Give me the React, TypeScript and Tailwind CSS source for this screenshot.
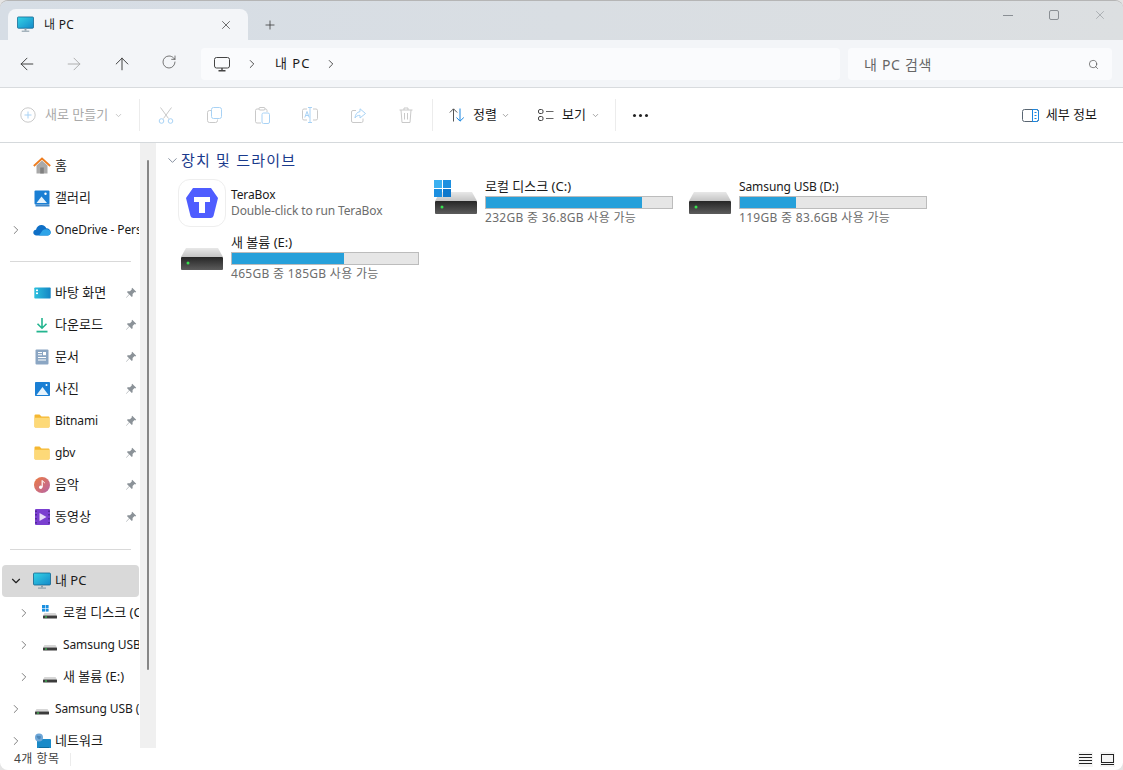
import { ArrowLeft, ArrowRight, ArrowUp, ChevronDown, ChevronRight, Plus, RotateCw, Search, X } from "lucide-react";
import type { ReactNode } from "react";

const fontClass = "font-['Noto_Sans','Noto_Sans_CJK_KR',sans-serif]";

function MonitorColor({ size = 18 }: { size?: number }) {
  return (
    <svg width={size} height={size} viewBox="0 0 18 18">
      <defs>
        <linearGradient id="screenFill" x1="0" y1="0" x2="1" y2="1">
          <stop offset="0" stopColor="#35d3e6" />
          <stop offset="1" stopColor="#1489c9" />
        </linearGradient>
      </defs>
      <rect x="0.5" y="1" width="17" height="12" rx="1" fill="url(#screenFill)" stroke="#11658f" strokeWidth="0.8" />
      <rect x="8" y="13" width="2" height="2.5" fill="#8ea0ac" />
      <rect x="5" y="15.5" width="8" height="1.2" fill="#8ea0ac" />
    </svg>
  );
}

function PinIcon() {
  return (
    <svg width="12" height="12" viewBox="0 0 12 12" fill="#8b9298">
      <path d="M7.2 0.8 11.2 4.8 10.2 5.4 9.5 5.1 7.6 7 7.6 9.2 6.8 10 4.4 7.6 1.4 10.8 1.1 10.5 4.1 7.3 1.9 5 2.8 4.2 5 4.2 6.9 2.3 6.6 1.7Z" />
    </svg>
  );
}

function HomeIcon() {
  return (
    <svg width="18" height="18" viewBox="0 0 18 18">
      <path d="M3.5 8.5V16.5H14.5V8.5L9 3.5Z" fill="#a9a9a9" />
      <rect x="7.2" y="10.5" width="3.6" height="6" fill="#808080" />
      <path d="M0.8 9 9 1.5 17.2 9" fill="none" stroke="#ee7d1f" strokeWidth="1.8" />
    </svg>
  );
}

function GalleryIcon() {
  return (
    <svg width="16" height="17" viewBox="0 0 16 17">
      <rect x="0.5" y="0.5" width="15" height="14" rx="1" fill="#1a7fd4" />
      <rect x="1.5" y="14.5" width="14" height="2" fill="#3f87c9" />
      <path d="M2.5 13 7.5 6.5 13 13Z" fill="#e6f3fc" />
      <circle cx="11.5" cy="3.8" r="1.2" fill="#fff" />
    </svg>
  );
}

function CloudIcon() {
  return (
    <svg width="18" height="12" viewBox="0 0 18 12">
      <path d="M3.5 11.5C1.5 11.5 0.3 10.2 0.3 8.6 0.3 7 1.5 5.9 3 5.8 3.6 2.8 6 1 8.5 1 10.8 1 12.6 2.3 13.3 4.3 15.8 4.4 17.7 6.2 17.7 8.3 17.7 10.2 16.3 11.5 14.5 11.5Z" fill="#0f6fc6" />
      <path d="M6 11.5 9.5 6.5C11 5 14.5 4.5 16.5 6.3 17.5 7.3 17.7 8.3 17.7 8.6 17.7 10.4 16.3 11.5 14.5 11.5Z" fill="#2ea4e8" />
    </svg>
  );
}

function DesktopIcon() {
  return (
    <svg width="17" height="12" viewBox="0 0 17 12">
      <defs>
        <linearGradient id="deskFill" x1="0" y1="0" x2="1" y2="0">
          <stop offset="0" stopColor="#2cc0de" />
          <stop offset="1" stopColor="#1485c4" />
        </linearGradient>
      </defs>
      <rect x="0.3" y="0.5" width="16.4" height="11" rx="0.8" fill="url(#deskFill)" />
      <rect x="2" y="2.5" width="2" height="1.6" fill="#fff" />
      <rect x="2" y="5.5" width="2" height="1.6" fill="#fff" />
    </svg>
  );
}

function DownloadIcon() {
  return (
    <svg width="16" height="16" viewBox="0 0 16 16" fill="none" stroke="#23b58f" strokeWidth="1.6">
      <path d="M8 1V11M3.5 6.8 8 11.2 12.5 6.8" />
      <path d="M2.5 14.6H13.5" strokeWidth="1.8" />
    </svg>
  );
}

function DocIcon() {
  return (
    <svg width="14" height="16" viewBox="0 0 14 16">
      <rect x="0.5" y="0.5" width="13" height="15" rx="1" fill="#8ba6c3" />
      <path d="M3 3.5H7M3 5.8H7M3 8.5H11M3 11H11" stroke="#fff" strokeWidth="1.1" />
      <rect x="8" y="3" width="3" height="3.2" fill="#fff" />
    </svg>
  );
}

function PhotoIcon() {
  return (
    <svg width="15" height="14" viewBox="0 0 15 14">
      <rect width="15" height="14" rx="0.8" fill="#1a7fd4" />
      <path d="M1.5 13 7.5 5 13.5 13Z" fill="#e6f3fc" />
      <circle cx="11.5" cy="3" r="1" fill="#fff" />
    </svg>
  );
}

function FolderIcon() {
  return (
    <svg width="16" height="14" viewBox="0 0 16 14">
      <path d="M0.5 1.5A1 1 0 0 1 1.5 0.5H5.5L7.5 2.5H14.5A1 1 0 0 1 15.5 3.5V12.5A1 1 0 0 1 14.5 13.5H1.5A1 1 0 0 1 0.5 12.5Z" fill="#f5b731" />
      <path d="M0.5 3.8H15.5V12.5A1 1 0 0 1 14.5 13.5H1.5A1 1 0 0 1 0.5 12.5Z" fill="#fdd978" />
    </svg>
  );
}

function MusicIcon() {
  return (
    <svg width="16" height="16" viewBox="0 0 16 16">
      <defs>
        <linearGradient id="musicFill" x1="0" y1="0" x2="1" y2="1">
          <stop offset="0" stopColor="#ee7b3e" />
          <stop offset="1" stopColor="#b665a8" />
        </linearGradient>
      </defs>
      <circle cx="8" cy="8" r="8" fill="url(#musicFill)" />
      <path d="M8.2 3.5V10" stroke="#fff" strokeWidth="1.2" />
      <path d="M8.2 3.5C9 4.8 10.5 4.8 10.5 6.2" stroke="#fff" strokeWidth="1" fill="none" />
      <circle cx="6.7" cy="10.2" r="1.7" fill="#fff" />
    </svg>
  );
}

function VideoIcon() {
  return (
    <svg width="15" height="16" viewBox="0 0 15 16">
      <rect width="15" height="16" rx="1" fill="#7a3fd0" />
      <path d="M4.5 4 11.5 8 4.5 12Z" fill="#e7dcf8" />
      <path d="M1 1.5V3M1 5V6.5M1 9V10.5M1 13V14.5M14 1.5V3M14 5V6.5M14 9V10.5M14 13V14.5" stroke="#3a1c77" strokeWidth="1.2" />
    </svg>
  );
}

function MiniDrive({ windows = false }: { windows?: boolean }) {
  return (
    <svg width="16" height="16" viewBox="0 0 16 16">
      <path d="M2.5 8H13.5L15 10.5H1Z" fill="#d6d6d6" />
      <rect x="1" y="10.5" width="14" height="3" rx="0.5" fill="#3c3c3c" />
      <rect x="3" y="11.5" width="2" height="1" fill="#3ee05a" />
      {windows && (
        <g fill="#1a8fe0">
          <rect x="0" y="0" width="3" height="3" />
          <rect x="3.6" y="0" width="3" height="3" />
          <rect x="0" y="3.6" width="3" height="3" />
          <rect x="3.6" y="3.6" width="3" height="3" />
        </g>
      )}
    </svg>
  );
}

function NetworkIcon() {
  return (
    <svg width="17" height="17" viewBox="0 0 17 17">
      <rect x="3" y="6" width="14" height="10" rx="0.8" fill="#1a8ac8" />
      <rect x="5" y="14" width="10" height="2" fill="#0f6b9d" />
      <circle cx="5" cy="4.5" r="4" fill="#6ea7d8" />
      <path d="M2.5 3C4 2 5 3.5 6.5 3 7.5 4 6.5 6 5 6.5 4 5.5 3 5 2.5 3Z" fill="#4d87b8" />
    </svg>
  );
}

type NavRow = {
  label: string;
  icon: ReactNode;
  pin?: boolean;
  chevron?: "right" | "down";
  level?: number;
  selected?: boolean;
};

const quickRows: NavRow[] = [
  { label: "바탕 화면", icon: <DesktopIcon />, pin: true },
  { label: "다운로드", icon: <DownloadIcon />, pin: true },
  { label: "문서", icon: <DocIcon />, pin: true },
  { label: "사진", icon: <PhotoIcon />, pin: true },
  { label: "Bitnami", icon: <FolderIcon />, pin: true },
  { label: "gbv", icon: <FolderIcon />, pin: true },
  { label: "음악", icon: <MusicIcon />, pin: true },
  { label: "동영상", icon: <VideoIcon />, pin: true },
];

const pcRows: NavRow[] = [
  { label: "내 PC", icon: <MonitorColor />, chevron: "down", selected: true },
  { label: "로컬 디스크 (C:)", icon: <MiniDrive windows />, chevron: "right", level: 1 },
  { label: "Samsung USB (D:)", icon: <MiniDrive />, chevron: "right", level: 1 },
  { label: "새 볼륨 (E:)", icon: <MiniDrive />, chevron: "right", level: 1 },
  { label: "Samsung USB (D:)", icon: <MiniDrive />, chevron: "right" },
  { label: "네트워크", icon: <NetworkIcon />, chevron: "right" },
];

// hangul reads wider in the original, latin labels stay at 12px
const hasHangul = (s: string) => /[가-힣]/.test(s);

function SidebarRow({ row }: { row: NavRow }) {
  return (
    <div
      className={
        "flex h-8 items-center text-[#1a1a1a] " +
        (row.selected ? "ml-[2px] w-[137px] rounded bg-[#d9d9d9] pl-[7px]" : row.level ? "w-[139px] pl-[17px]" : "w-[139px] pl-[9px]")
      }
    >
      <span className="flex w-[14px] shrink-0 items-center justify-center text-[#7d7d7d]">
        {row.chevron === "right" && <ChevronRight size={14} strokeWidth={1.7} />}
        {row.chevron === "down" && <ChevronDown size={14} strokeWidth={2} className="text-[#222]" />}
      </span>
      <span className="ml-[10px] flex w-[18px] shrink-0 items-center justify-center">{row.icon}</span>
      <span
        className={
          "ml-[4px] min-w-0 flex-1 overflow-hidden whitespace-nowrap " +
          (hasHangul(row.label) ? "text-[13px]" : "text-[12px] tracking-[-0.1px]")
        }
      >
        {row.label}
      </span>
      {row.pin && (
        <span className="mr-[1px] flex w-[14px] shrink-0 justify-center">
          <PinIcon />
        </span>
      )}
    </div>
  );
}

function Sidebar() {
  return (
    <div className="relative flex w-[156px] shrink-0">
      <div className="w-[140px] shrink-0 overflow-hidden bg-white pt-[7px]">
        <SidebarRow row={{ label: "홈", icon: <HomeIcon /> }} />
        <SidebarRow row={{ label: "갤러리", icon: <GalleryIcon /> }} />
        <SidebarRow row={{ label: "OneDrive - Personal", icon: <CloudIcon />, chevron: "right" }} />
        <div className="mt-[15px] mb-[15px] ml-[10px] h-px w-[121px] bg-[#d9d9d9]" />
        {quickRows.map((row) => (
          <SidebarRow key={row.label} row={row} />
        ))}
        <div className="mt-4 mb-[15px] ml-[10px] h-px w-[121px] bg-[#d9d9d9]" />
        {pcRows.map((row, i) => (
          <SidebarRow key={i} row={row} />
        ))}
      </div>
      <div className="w-4 shrink-0 bg-[#f0f0f0] pt-[17px] pl-[7px]">
        <div className="h-[510px] w-[2px] rounded-sm bg-[#868686]" />
      </div>
    </div>
  );
}

function DriveIcon({ windows = false }: { windows?: boolean }) {
  return (
    <svg width="48" height="48" viewBox="0 0 48 48">
      <defs>
        <linearGradient id="driveBody" x1="0" y1="0" x2="0" y2="1">
          <stop offset="0" stopColor="#262626" />
          <stop offset="1" stopColor="#5c5c5c" />
        </linearGradient>
        <linearGradient id="driveTop" x1="0" y1="0" x2="0" y2="1">
          <stop offset="0" stopColor="#e8e8e8" />
          <stop offset="1" stopColor="#c4c4c4" />
        </linearGradient>
      </defs>
      <path d="M7 13H39L44 22H2Z" fill="url(#driveTop)" />
      <rect x="2" y="22" width="42" height="13" rx="1" fill="url(#driveBody)" />
      <circle cx="9" cy="28" r="1.5" fill="#37e04e" />
      {windows && (
        <g>
          <rect x="1" y="1" width="8" height="8" fill="#3bb0f0" />
          <rect x="10" y="1" width="8" height="8" fill="#1c8fe0" />
          <rect x="1" y="10" width="8" height="8" fill="#1c8fe0" />
          <rect x="10" y="10" width="8" height="8" fill="#0f78cc" />
        </g>
      )}
    </svg>
  );
}

function TeraBoxIcon() {
  return (
    <div className="flex h-12 w-12 items-center justify-center rounded-xl border border-[#eeeeee] bg-white">
      <svg width="34" height="32" viewBox="0 0 34 32">
        <path d="M8 1H26L33 11 28.5 29A3 3 0 0 1 25.5 31H8.5A3 3 0 0 1 5.5 29L1 11Z" fill="#4f5dff" />
        <path d="M9 10H25V15H20V26H14V15H9Z" fill="#fff" />
      </svg>
    </div>
  );
}

function DriveTile({ name, used, sub, windows }: { name: string; used: number; sub: string; windows?: boolean }) {
  return (
    <div className="flex h-14 w-[254px] items-center">
      <div className="w-[53px] shrink-0 pl-px">
        <DriveIcon windows={windows} />
      </div>
      <div className="flex w-[188px] flex-col text-[12px]">
        <span
          className={
            "h-[15px] leading-[13px] whitespace-nowrap text-[#1a1a1a] " +
            (hasHangul(name) ? "text-[13px]" : "text-[12px] tracking-[-0.1px]")
          }
        >
          {name}
        </span>
        <div className="mt-px h-[13px] w-[188px] border border-[#bcbcbc] bg-[#e6e6e6]">
          <div className="h-full bg-[#26a0da]" style={{ width: `${used}%` }} />
        </div>
        <span className="mt-px h-4 leading-4 tracking-[0.3px] whitespace-nowrap text-[#6d6d6d]">{sub}</span>
      </div>
    </div>
  );
}

function Content() {
  return (
    <div className="min-w-0 flex-1 bg-white pt-[7px] pl-[9px]">
      <div className="flex h-5 items-center">
        <ChevronDown size={15} strokeWidth={1.2} className="text-[#5d6b80]" />
        <span className="ml-px text-[15px] tracking-[1.2px] whitespace-nowrap text-[#1a3a8c]">장치 및 드라이브</span>
      </div>
      <div className="mt-[5px] ml-[13px] flex w-[770px] flex-wrap">
        <div className="flex h-14 w-[254px] items-center">
          <div className="w-[53px] shrink-0">
            <TeraBoxIcon />
          </div>
          <div className="flex flex-col text-[12px] leading-4 tracking-[-0.12px]">
            <span className="text-[#1a1a1a]">TeraBox</span>
            <span className="text-[#6d6d6d]">Double-click to run TeraBox</span>
          </div>
        </div>
        <DriveTile name="로컬 디스크 (C:)" used={84} sub="232GB 중 36.8GB 사용 가능" windows />
        <DriveTile name="Samsung USB (D:)" used={30} sub="119GB 중 83.6GB 사용 가능" />
        <DriveTile name="새 볼륨 (E:)" used={60} sub="465GB 중 185GB 사용 가능" />
      </div>
    </div>
  );
}

function ToolIcon({ children }: { children: ReactNode }) {
  return <div className="flex h-5 w-12 items-center justify-center">{children}</div>;
}

function Toolbar() {
  const blue = "#a8d2f5";
  const grey = "#c9c9c9";
  return (
    <div className="flex h-[55px] items-center border-b border-[#d5d9dc] bg-white pl-5 text-[13px]">
      <svg width="16" height="16" viewBox="0 0 16 16" fill="none">
        <circle cx="8" cy="8" r="7.2" stroke={grey} />
        <path d="M8 4.5V11.5M4.5 8H11.5" stroke={blue} />
      </svg>
      <span className="ml-[9px] w-[65px] whitespace-nowrap text-[#a9a9a9]">새로 만들기</span>
      <ChevronDown size={9} className="ml-[4px] text-[#b5b5b5]" />
      <div className="ml-[16px] h-8 w-px bg-[#ececec]" />
      <div className="ml-[2px] flex">
        <ToolIcon>
          <svg width="16" height="17" viewBox="0 0 16 17" fill="none" stroke={grey}>
            <path d="M2.5 0.5 10.5 11.5M13.5 0.5 5.5 11.5" />
            <circle cx="3.5" cy="14" r="2.3" stroke={blue} />
            <circle cx="12.5" cy="14" r="2.3" stroke={blue} />
          </svg>
        </ToolIcon>
        <ToolIcon>
          <svg width="15" height="16" viewBox="0 0 15 16" fill="none">
            <rect x="4.5" y="0.5" width="10" height="11" rx="2" stroke={blue} />
            <path d="M4 3.5H2.5A2 2 0 0 0 0.5 5.5V13.5A2 2 0 0 0 2.5 15.5H8.5A2 2 0 0 0 10.5 13.5V12.5" stroke={grey} />
          </svg>
        </ToolIcon>
        <ToolIcon>
          <svg width="15" height="17" viewBox="0 0 15 17" fill="none">
            <path d="M4.5 2H2A1.5 1.5 0 0 0 0.5 3.5V14.5A1.5 1.5 0 0 0 2 16H6M9.5 2H10.5A1.5 1.5 0 0 1 12 3.5V5" stroke={grey} />
            <rect x="4" y="0.5" width="6" height="2.5" rx="1" stroke={grey} />
            <rect x="7" y="6" width="7.5" height="10.5" rx="1.5" stroke={blue} />
          </svg>
        </ToolIcon>
        <ToolIcon>
          <svg width="16" height="16" viewBox="0 0 16 16" fill="none">
            <path d="M5 2H2A1.5 1.5 0 0 0 0.5 3.5V11.5A1.5 1.5 0 0 0 2 13H5M11 2H14A1.5 1.5 0 0 1 15.5 3.5V11.5A1.5 1.5 0 0 1 14 13H11" stroke={grey} />
            <path d="M8 0.5V15.5M6 0.5H10M6 15.5H10" stroke={blue} />
            <path d="M2.8 10.5 5 4.5 7.2 10.5M3.6 8.5H6.4" stroke={blue} />
          </svg>
        </ToolIcon>
        <ToolIcon>
          <svg width="15" height="15" viewBox="0 0 15 15" fill="none">
            <path d="M5 2.5H2A1.5 1.5 0 0 0 0.5 4V13A1.5 1.5 0 0 0 2 14.5H10.5A1.5 1.5 0 0 0 12 13V10.5" stroke={grey} />
            <path d="M9 0.8 14.5 5.5 9 10V7.3C6.5 7.3 5 8.3 4 10 4.2 6.5 6 4 9 3.6Z" stroke={blue} />
          </svg>
        </ToolIcon>
        <ToolIcon>
          <svg width="14" height="16" viewBox="0 0 14 16" fill="none" stroke={grey}>
            <path d="M0.5 3H13.5M5 3V1H9V3M2 3 3 15.5H11L12 3M5.5 6V12.5M8.5 6V12.5" />
          </svg>
        </ToolIcon>
      </div>
      <div className="ml-[2px] h-8 w-px bg-[#ececec]" />
      <svg className="ml-[16px]" width="16" height="14" viewBox="0 0 16 14" fill="none">
        <path d="M4.5 13.5V1M0.8 4.5 4.5 0.8 8.2 4.5" stroke="#555" />
        <path d="M11 0.5V13M7.5 9.5 11 13.2 14.8 9.5" stroke="#1a86e0" />
      </svg>
      <span className="ml-2 w-6 whitespace-nowrap text-[#1a1a1a]">정렬</span>
      <ChevronDown size={9} className="ml-[4px] text-[#8a8a8a]" />
      <svg className="ml-[28px]" width="16" height="12" viewBox="0 0 16 12" fill="none" stroke="#444">
        <rect x="0.5" y="0.5" width="4.5" height="4" rx="1.5" />
        <rect x="0.5" y="7.5" width="4.5" height="4" rx="1.5" />
        <path d="M8 2.5H15.5M8 9.5H15.5" stroke="#666" />
      </svg>
      <span className="ml-[8px] w-6 whitespace-nowrap text-[#1a1a1a]">보기</span>
      <ChevronDown size={9} className="ml-[5px] text-[#8a8a8a]" />
      <div className="ml-[15px] h-8 w-px bg-[#ececec]" />
      <div className="ml-[17px] flex gap-[3px]">
        <span className="h-[3px] w-[3px] rounded-full bg-[#222]" />
        <span className="h-[3px] w-[3px] rounded-full bg-[#222]" />
        <span className="h-[3px] w-[3px] rounded-full bg-[#222]" />
      </div>
      <div className="ml-auto flex items-center pr-[26px]">
        <svg width="17" height="13" viewBox="0 0 17 13" fill="none">
          <rect x="0.5" y="0.5" width="16" height="12" rx="2" stroke="#5a6672" />
          <path d="M10.5 0.5H14.5A2 2 0 0 1 16.5 2.5V10.5A2 2 0 0 1 14.5 12.5H10.5Z" stroke="#1a86e0" />
          <path d="M12.5 3.5H14.5M12.5 6.5H14.5M12.5 9.5H14.5" stroke="#1a86e0" />
        </svg>
        <span className="ml-[7px] whitespace-nowrap text-[#1a1a1a]">세부 정보</span>
      </div>
    </div>
  );
}

function NavBar() {
  return (
    <div className="flex h-[48px] items-center border-b border-[#d8dbde] bg-[#f3f5f8] pt-px">
      <div className="flex w-[193px] shrink-0 pl-[3px]">
        <span className="flex w-12 justify-center text-[#333]">
          <ArrowLeft size={20} strokeWidth={1.1} />
        </span>
        <span className="flex w-12 justify-center text-[#a8a8a8]">
          <ArrowRight size={20} strokeWidth={1.1} />
        </span>
        <span className="flex w-12 justify-center text-[#333]">
          <ArrowUp size={20} strokeWidth={1.1} />
        </span>
        <span className="flex w-12 justify-center text-[#555]">
          <RotateCw size={16} strokeWidth={1.2} />
        </span>
      </div>
      <div className="ml-[8px] flex h-8 w-[639px] shrink-0 items-center rounded bg-[#fafbfd] pl-[13px] text-[13px] text-[#1a1a1a]">
        <svg width="16" height="15" viewBox="0 0 16 15" fill="none" stroke="#444">
          <rect x="0.5" y="0.5" width="15" height="10.5" rx="2" />
          <path d="M8 11V13.5M4.5 13.8H11.5" strokeWidth="1.4" />
        </svg>
        <ChevronRight size={14} strokeWidth={1.3} className="ml-[15px]" />
        <span className="ml-[16px] tracking-[1px] whitespace-nowrap">내 PC</span>
        <ChevronRight size={14} strokeWidth={1.3} className="ml-[14px]" />
      </div>
      <div className="ml-2 flex h-8 w-[264px] shrink-0 items-center rounded bg-[#fafbfd] pr-[13px] pl-[16px] text-[14px] text-[#666]">
        <span className="tracking-[0.7px] whitespace-nowrap">내 PC 검색</span>
        <Search size={11} strokeWidth={1.4} className="ml-auto text-[#444]" />
      </div>
    </div>
  );
}

function TitleBar() {
  return (
    <div className="flex h-[39px] items-end bg-gradient-to-r from-[#d6dde5] to-[#dcdfe1] pl-2">
      <div className="flex h-[31px] w-[240px] items-center rounded-t-lg bg-[#f3f5f8] pr-[15px] pl-[9px] text-[12px] text-[#1a1a1a]">
        <MonitorColor size={17} />
        <span className="ml-[10px] tracking-[0.3px]">내 PC</span>
        <X size={14} strokeWidth={1.2} className="ml-auto text-[#333]" />
      </div>
      <div className="mb-[8px] ml-[15px] flex text-[#333]">
        <Plus size={14} strokeWidth={1.3} />
      </div>
      <div className="mb-[18px] ml-auto flex items-center text-[#8a8f94]">
        <span className="flex w-[46px] justify-center">
          <span className="h-px w-[10px] bg-[#8a8f94]" />
        </span>
        <span className="flex w-[46px] justify-center">
          <span className="h-[10px] w-[10px] rounded-[2px] border border-[#8a8f94]" />
        </span>
        <span className="flex w-[46px] justify-center">
          <X size={14} strokeWidth={1} />
        </span>
      </div>
    </div>
  );
}

function StatusBar() {
  return (
    <div className="flex h-[22px] items-center bg-white pr-[8px] pl-[14px] text-[12px] text-[#444]">
      <span className="tracking-[0.5px]">4개 항목</span>
      <span className="ml-[10px] h-[13px] w-px bg-[#ececec]" />
      <div className="ml-auto flex items-center gap-[7px]">
        <span className="flex h-[15px] w-[15px] flex-col justify-center gap-[2px] bg-[#f5f5f5] px-px">
          <span className="h-px bg-[#222]" />
          <span className="h-px bg-[#222]" />
          <span className="h-px bg-[#222]" />
          <span className="h-px bg-[#222]" />
        </span>
        <span className="flex h-[15px] w-[15px] flex-col justify-center gap-px bg-[#f5f5f5] px-px">
          <span className="h-[9px] border border-[#222]" />
          <span className="h-px bg-[#222]" />
        </span>
      </div>
    </div>
  );
}

export default function App() {
  return (
    <div className={"h-[770px] w-[1123px] overflow-hidden bg-[#e4e4e4] " + fontClass}>
      <div className="flex h-full flex-col overflow-hidden rounded-lg border-t border-[#b5b5b5]">
        <TitleBar />
        <NavBar />
        <Toolbar />
        <div className="flex min-h-0 flex-1">
          <Sidebar />
          <Content />
        </div>
        <StatusBar />
      </div>
    </div>
  );
}
